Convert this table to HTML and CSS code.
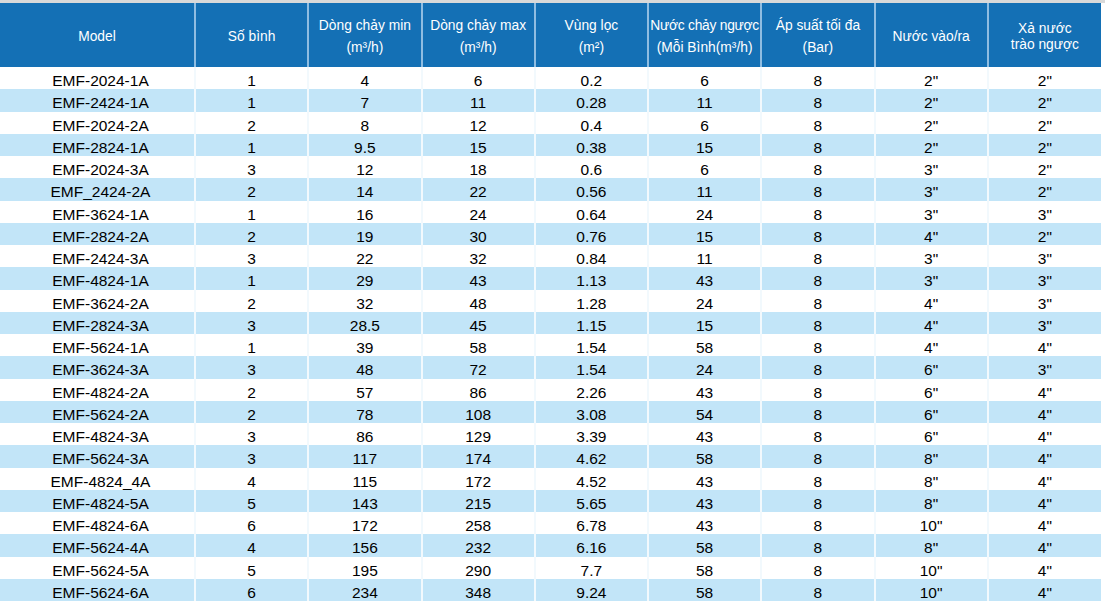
FILE: index.html
```html
<!DOCTYPE html>
<html lang="vi">
<head>
<meta charset="utf-8">
<title>EMF</title>
<link rel="stylesheet" href="styles.css">
</head>
<body>
<div class="topbar"></div>
<table class="spec">
<colgroup>
<col class="c-model"><col class="c"><col class="c"><col class="c"><col class="c"><col class="c"><col class="c"><col class="c"><col class="c">
</colgroup>
<thead>
<tr>
<th><div class="one">Model</div></th>
<th><div class="one">Số bình</div></th>
<th><div class="two">Dòng chảy min</div><div class="two">(m³/h)</div></th>
<th><div class="two">Dòng chảy max</div><div class="two">(m³/h)</div></th>
<th><div class="two">Vùng lọc</div><div class="two">(m²)</div></th>
<th><div class="two tight">Nước chảy ngược</div><div class="two">(Mỗi Bình(m³/h)</div></th>
<th><div class="two">Áp suất tối đa</div><div class="two">(Bar)</div></th>
<th><div class="one">Nước vào/ra</div></th>
<th><div class="wrap">Xả nước<br>trào ngược</div></th>
</tr>
</thead>
<tbody>
<tr><td>EMF-2024-1A</td><td>1</td><td>4</td><td>6</td><td>0.2</td><td>6</td><td>8</td><td>2"</td><td>2"</td></tr>
<tr><td>EMF-2424-1A</td><td>1</td><td>7</td><td>11</td><td>0.28</td><td>11</td><td>8</td><td>2"</td><td>2"</td></tr>
<tr><td>EMF-2024-2A</td><td>2</td><td>8</td><td>12</td><td>0.4</td><td>6</td><td>8</td><td>2"</td><td>2"</td></tr>
<tr><td>EMF-2824-1A</td><td>1</td><td>9.5</td><td>15</td><td>0.38</td><td>15</td><td>8</td><td>2"</td><td>2"</td></tr>
<tr><td>EMF-2024-3A</td><td>3</td><td>12</td><td>18</td><td>0.6</td><td>6</td><td>8</td><td>3"</td><td>2"</td></tr>
<tr><td>EMF_2424-2A</td><td>2</td><td>14</td><td>22</td><td>0.56</td><td>11</td><td>8</td><td>3"</td><td>2"</td></tr>
<tr><td>EMF-3624-1A</td><td>1</td><td>16</td><td>24</td><td>0.64</td><td>24</td><td>8</td><td>3"</td><td>3"</td></tr>
<tr><td>EMF-2824-2A</td><td>2</td><td>19</td><td>30</td><td>0.76</td><td>15</td><td>8</td><td>4"</td><td>2"</td></tr>
<tr><td>EMF-2424-3A</td><td>3</td><td>22</td><td>32</td><td>0.84</td><td>11</td><td>8</td><td>3"</td><td>3"</td></tr>
<tr><td>EMF-4824-1A</td><td>1</td><td>29</td><td>43</td><td>1.13</td><td>43</td><td>8</td><td>3"</td><td>3"</td></tr>
<tr><td>EMF-3624-2A</td><td>2</td><td>32</td><td>48</td><td>1.28</td><td>24</td><td>8</td><td>4"</td><td>3"</td></tr>
<tr><td>EMF-2824-3A</td><td>3</td><td>28.5</td><td>45</td><td>1.15</td><td>15</td><td>8</td><td>4"</td><td>3"</td></tr>
<tr><td>EMF-5624-1A</td><td>1</td><td>39</td><td>58</td><td>1.54</td><td>58</td><td>8</td><td>4"</td><td>4"</td></tr>
<tr><td>EMF-3624-3A</td><td>3</td><td>48</td><td>72</td><td>1.54</td><td>24</td><td>8</td><td>6"</td><td>3"</td></tr>
<tr><td>EMF-4824-2A</td><td>2</td><td>57</td><td>86</td><td>2.26</td><td>43</td><td>8</td><td>6"</td><td>4"</td></tr>
<tr><td>EMF-5624-2A</td><td>2</td><td>78</td><td>108</td><td>3.08</td><td>54</td><td>8</td><td>6"</td><td>4"</td></tr>
<tr><td>EMF-4824-3A</td><td>3</td><td>86</td><td>129</td><td>3.39</td><td>43</td><td>8</td><td>6"</td><td>4"</td></tr>
<tr><td>EMF-5624-3A</td><td>3</td><td>117</td><td>174</td><td>4.62</td><td>58</td><td>8</td><td>8"</td><td>4"</td></tr>
<tr><td>EMF-4824_4A</td><td>4</td><td>115</td><td>172</td><td>4.52</td><td>43</td><td>8</td><td>8"</td><td>4"</td></tr>
<tr><td>EMF-4824-5A</td><td>5</td><td>143</td><td>215</td><td>5.65</td><td>43</td><td>8</td><td>8"</td><td>4"</td></tr>
<tr><td>EMF-4824-6A</td><td>6</td><td>172</td><td>258</td><td>6.78</td><td>43</td><td>8</td><td>10"</td><td>4"</td></tr>
<tr><td>EMF-5624-4A</td><td>4</td><td>156</td><td>232</td><td>6.16</td><td>58</td><td>8</td><td>8"</td><td>4"</td></tr>
<tr><td>EMF-5624-5A</td><td>5</td><td>195</td><td>290</td><td>7.7</td><td>58</td><td>8</td><td>10"</td><td>4"</td></tr>
<tr><td>EMF-5624-6A</td><td>6</td><td>234</td><td>348</td><td>9.24</td><td>58</td><td>8</td><td>10"</td><td>4"</td></tr>
</tbody>
</table>
</body>
</html>
```
FILE: styles.css
```css
html, body {
  margin: 0;
  padding: 0;
  background: #ffffff;
}
body {
  width: 1105px;
  height: 606px;
  overflow: hidden;
  font-family: "Liberation Sans", Arial, sans-serif;
}
.topbar {
  height: 3px;
  background: #d9d9d9;
}
.spec {
  width: 1101px;
  table-layout: fixed;
  border-collapse: collapse;
  border-spacing: 0;
}
.c-model { width: 195px; }
.c { width: 113.25px; }

.spec th {
  height: 64px;
  padding: 4px 0 0;
  box-sizing: border-box;
  background: #1470b5;
  color: #ffffff;
  font-weight: normal;
  font-size: 13.8px;
  text-align: center;
  vertical-align: middle;
  white-space: nowrap;
  overflow: hidden;
  border-left: 2px solid #8fbde2;
}
.spec th:first-child,
.spec td:first-child {
  border-left: none;
}
.one { line-height: 18px; }
.two { line-height: 22px; }
.tight { letter-spacing: -0.25px; }
.wrap { line-height: 16.5px; }

.spec td {
  height: 22.25px;
  padding: 5px 0 0;
  box-sizing: border-box;
  line-height: 17px;
  font-size: 15.5px;
  color: #000000;
  text-align: center;
  vertical-align: top;
  border-left: 2px solid #f2f9fd;
  white-space: nowrap;
}
.spec tbody tr:nth-child(even) td {
  background: #c2e5f8;
}
.spec td:first-child {
  padding-left: 7px;
}
```
